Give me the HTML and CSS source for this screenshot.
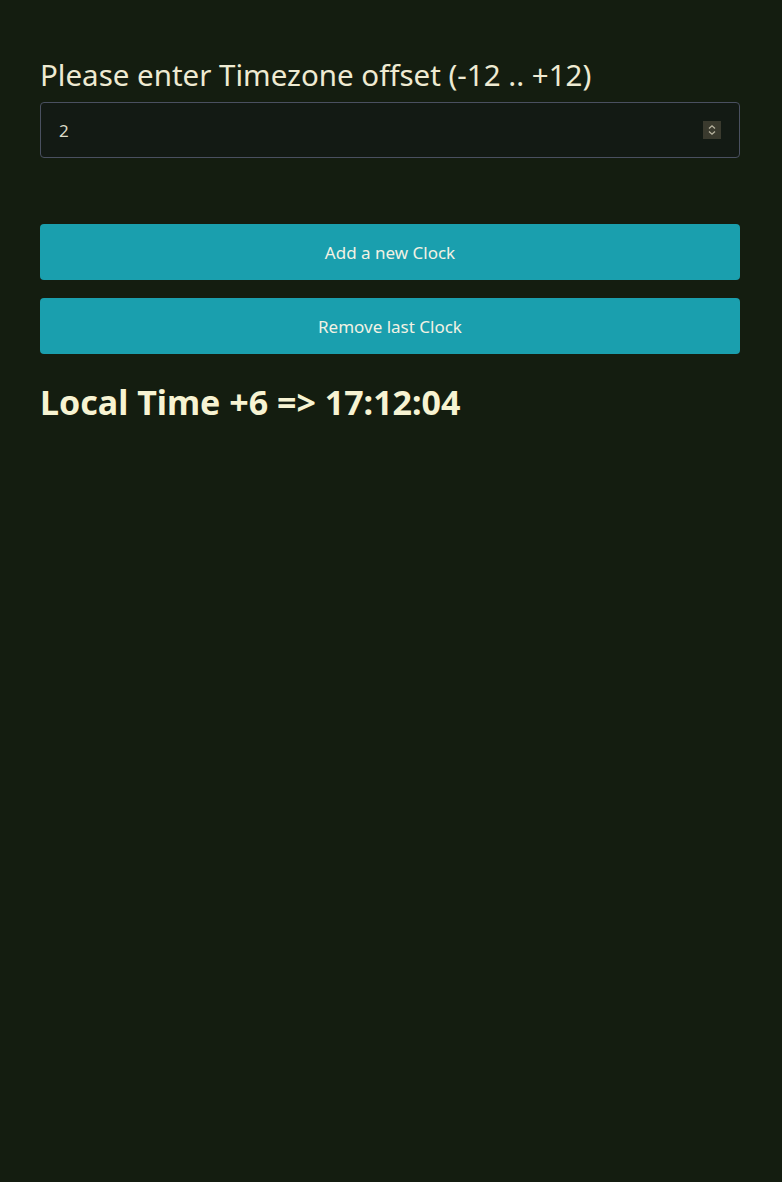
FILE: index.html
```html
<!DOCTYPE html>
<html>
<head>
<meta charset="utf-8">
<link rel="stylesheet" href="styles.css">
</head>
<body>
<main class="page">
  <label class="label" for="tz">Please enter Timezone offset (-12 .. +12)</label>
  <div class="field">
    <span class="value">2</span>
    <span class="spin"><svg width="10" height="12" viewBox="0 0 10 12"><path d="M2 4.5 L5 1.8 L8 4.5 M2 7.5 L5 10.2 L8 7.5" fill="none" stroke="#b8b4a0" stroke-width="1.3"/></svg></span>
  </div>
  <div class="actions">
    <button class="btn">Add a new Clock</button>
    <button class="btn">Remove last Clock</button>
  </div>
  <h2 class="clock">Local Time +6 =&gt; 17:12:04</h2>
</main>
</body>
</html>
```
FILE: styles.css
```css
html, body {
  margin: 0;
  padding: 0;
  background: #141d10;
  height: 100%;
}
body {
  font-family: "Noto Sans", "DejaVu Sans", sans-serif;
  color: #f4f0d0;
}
.page {
  padding: 56px 42px 0 40px;
  display: flex;
  flex-direction: column;
}
.label {
  font-size: 29.5px;
  line-height: 38px;
  margin-bottom: 8px;
  color: #eeead2;
}
.field {
  height: 54px;
  border: 1px solid #4a5060;
  border-radius: 4px;
  display: flex;
  align-items: center;
  justify-content: space-between;
  padding: 0 18px 0 18px;
  background: #131a14;
}
.value {
  font-size: 17px;
  color: #dcdac8;
}
.spin {
  width: 18px;
  height: 18px;
  background: #3a3a2e;
  display: flex;
  align-items: center;
  justify-content: center;
}
.actions {
  margin-top: 66px;
  display: flex;
  flex-direction: column;
  gap: 18px;
}
.btn {
  height: 56px;
  border: none;
  border-radius: 4px;
  background: #1a9fae;
  color: #f2f2e4;
  font-family: "Noto Sans", "DejaVu Sans", sans-serif;
  font-size: 17px;
}
.clock {
  margin: 26px 0 0;
  font-size: 34px;
  line-height: 44px;
  font-weight: bold;
  color: #f7f3d2;
}
```
